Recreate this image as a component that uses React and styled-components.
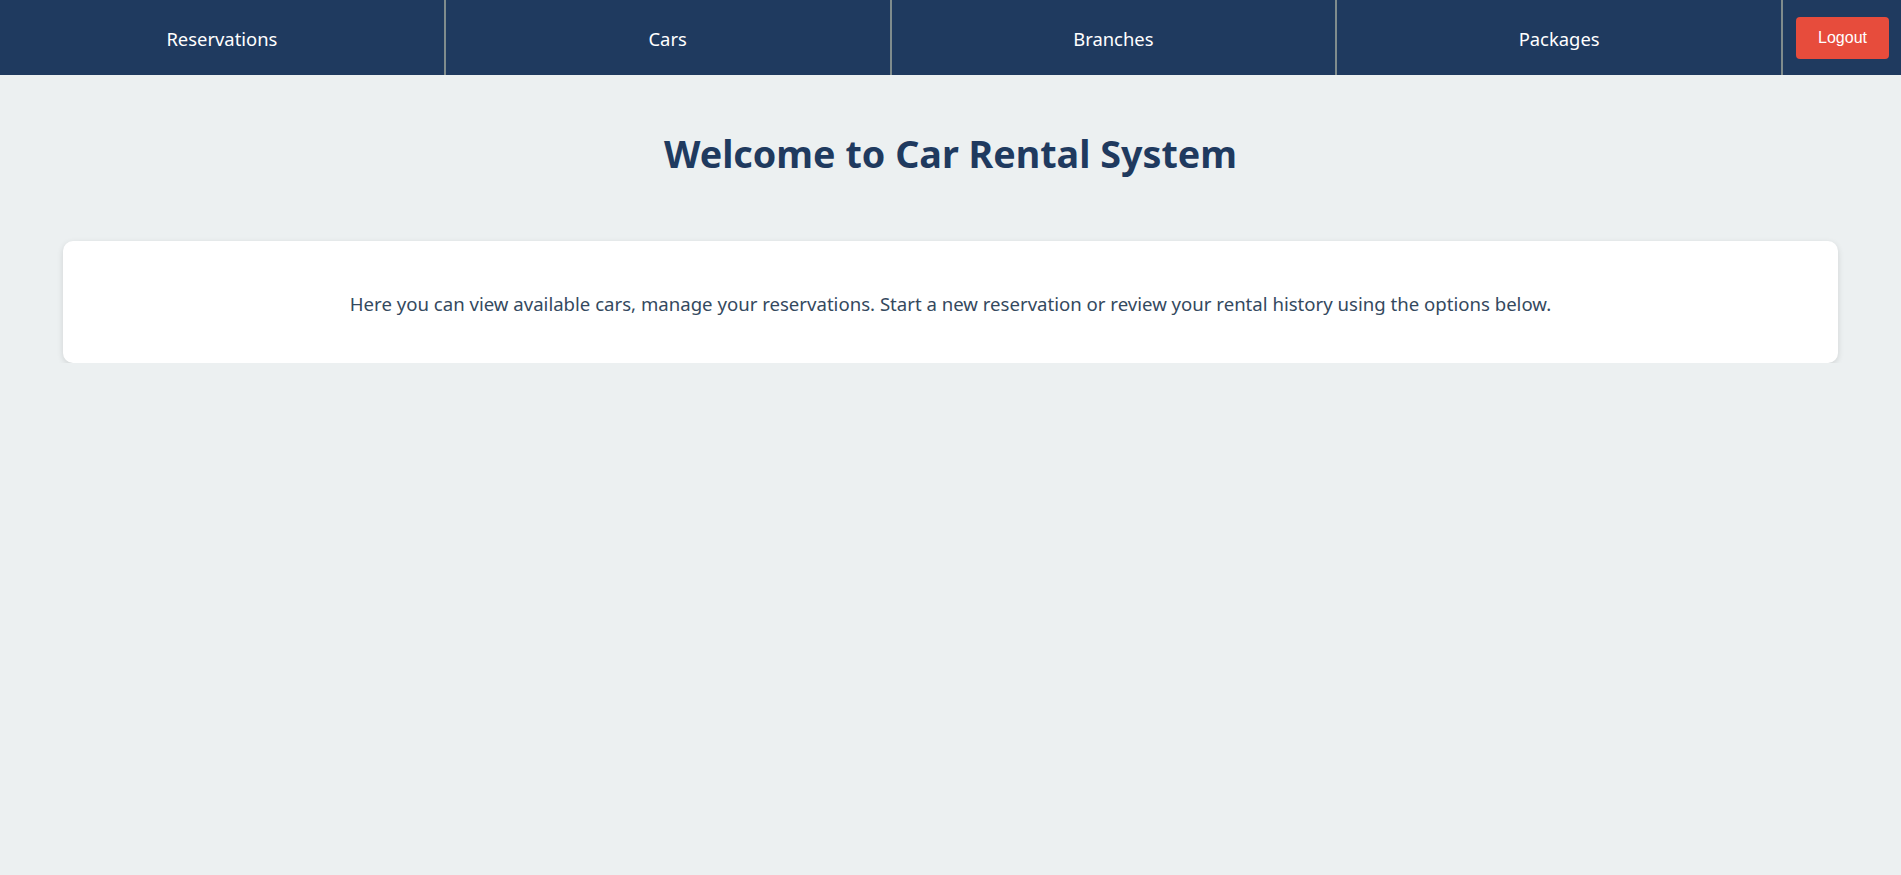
import styled, { createGlobalStyle } from "styled-components";

const GlobalStyle = createGlobalStyle`
  * {
    box-sizing: border-box;
  }
  body {
    margin: 0;
    background: #ecf0f1;
    font-family: "Noto Sans", "Open Sans", sans-serif;
  }
`;

const NAV_ITEMS = ["Reservations", "Cars", "Branches", "Packages"];

function App() {
  return (
    <>
      <GlobalStyle />
      <NavBar>
        <NavList>
          {NAV_ITEMS.map((item) => (
            <NavItem key={item}>
              <NavLink href="#">{item}</NavLink>
            </NavItem>
          ))}
        </NavList>
        <LogoutBox>
          <LogoutBtn type="button">Logout</LogoutBtn>
        </LogoutBox>
      </NavBar>
      <Main>
        <Title>Welcome to Car Rental System</Title>
        <Card>
          <CardText>
            Here you can view available cars, manage your reservations. Start a
            new reservation or review your rental history using the options
            below.
          </CardText>
        </Card>
      </Main>
    </>
  );
}

const NavBar = styled.nav`
  display: flex;
  height: 75px;
  background: #1f3a5f;
`;

const NavList = styled.ul`
  display: flex;
  flex: 1;
  margin: 0;
  padding: 0;
  list-style: none;
`;

const NavItem = styled.li`
  flex: 1;
  display: flex;
  border-right: 2px solid #7f8c8d;
`;

const NavLink = styled.a`
  flex: 1;
  display: flex;
  align-items: center;
  justify-content: center;
  padding-top: 1px;
  color: #ffffff;
  text-decoration: none;
  font-size: 18.4px;
`;

const LogoutBox = styled.div`
  display: flex;
  align-items: center;
  padding: 0 12px 0 13px;
`;

const LogoutBtn = styled.button`
  width: 93px;
  height: 42px;
  border: none;
  border-radius: 4px;
  background: #e74c3c;
  color: #ffffff;
  font-family: "Liberation Sans", Arial, sans-serif;
  font-size: 16px;
  cursor: pointer;
`;

const Main = styled.main`
  padding: 0 63px;
`;

const Title = styled.h1`
  margin: 0;
  padding: 55px 0 63px;
  text-align: center;
  color: #1f3a5f;
  font-size: 37.7px;
  line-height: 48px;
  font-weight: 700;
`;

const Card = styled.section`
  display: flex;
  align-items: center;
  justify-content: center;
  height: 122px;
  padding-top: 3px;
  background: #ffffff;
  border-radius: 10px;
  box-shadow: 0 2px 6px rgba(0, 0, 0, 0.12);
`;

const CardText = styled.p`
  margin: 0;
  color: #34495e;
  font-size: 18.6px;
`;

export default App;
